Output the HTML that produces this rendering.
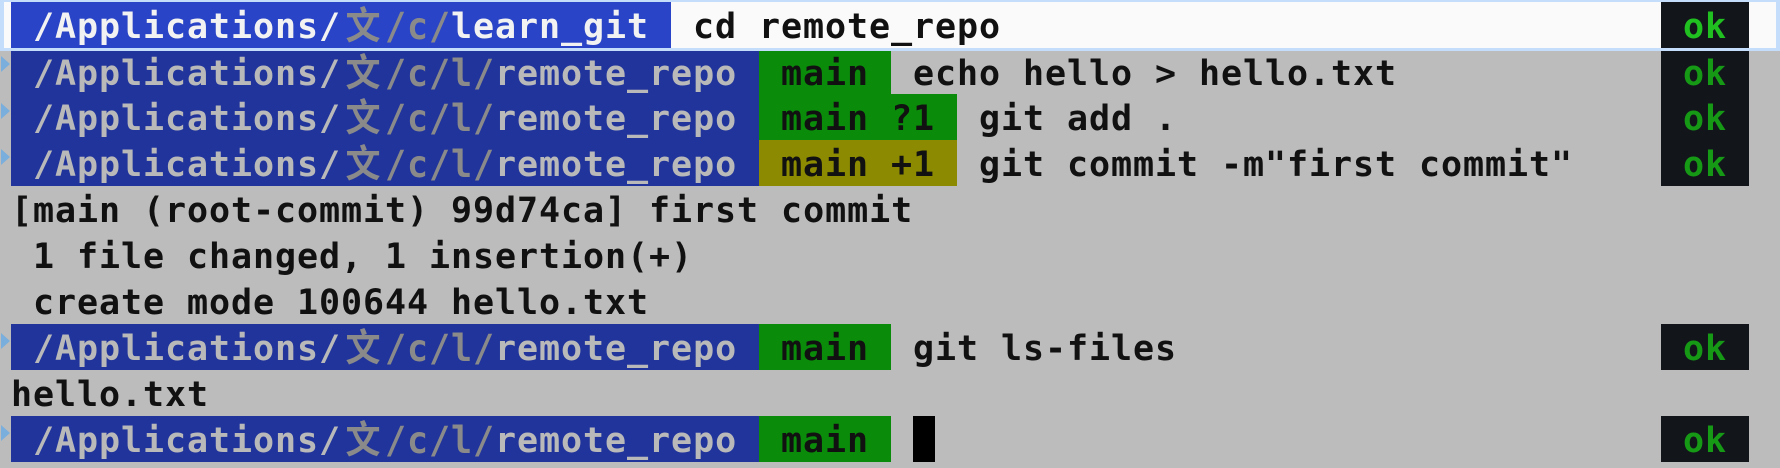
<!DOCTYPE html>
<html><head><meta charset="utf-8"><style>
html,body{margin:0;padding:0}
body{width:1780px;height:466px;background:#bcbcbc;position:relative;overflow:hidden;
font-family:"DejaVu Sans Mono","Liberation Mono","Noto Sans CJK SC",monospace;font-weight:bold;font-size:35px;}
.row{position:absolute;left:0;width:1780px;height:46px;}
.s{position:absolute;top:0;height:100%;line-height:50px;white-space:pre;letter-spacing:0.93px;}
.s span{display:inline-block;transform:scaleY(1.08)}
.b{background:#21349b;color:#b9b9b9}
.b1{background:#2944c6;color:#f2f2f2}
.dim{color:#8a8a8a}
.g{background:#0a8c0a;color:#111}
.o{background:#8c8a00;color:#111}
.t{color:#111}
.ok{background:#12161b;color:#169a16;text-align:center}
.cj{display:inline-block;width:44px;text-align:center;letter-spacing:0;font-weight:bold}
.tri{position:absolute;left:1px;width:0;height:0;border-top:8px solid transparent;border-bottom:8px solid transparent;border-left:9px solid #7aaedc;}
</style></head><body>
<div style="position:absolute;left:0;top:0;width:1780px;height:51px;background:#c4ddfa"></div>
<div style="position:absolute;left:4px;top:2px;width:1772px;height:46px;background:#fafafa"></div>
<div class="row" style="top:2px">
<div class="s b1" style="left:11px;width:660px"> /Applications/<span class="cj dim">文</span><span class="dim">/c/</span>learn_git</div>
<div class="s t" style="left:671px"> cd remote_repo</div>
<div class="s ok" style="left:1661px;width:88px;color:#20c020">ok</div>
</div>

<div class="row" style="top:51px;height:43px">
<div class="tri" style="top:5px"></div>
<div class="s b" style="left:11px;width:748px;line-height:46px"> /Applications/<span class="cj dim">文</span><span class="dim">/c/l/</span>remote_repo</div>
<div class="s g" style="left:759px;width:132px;line-height:46px"> main</div>
<div class="s t" style="left:891px;line-height:46px"> echo hello &gt; hello.txt</div>
</div>
<div class="row" style="top:94px">
<div class="tri" style="top:9px"></div>
<div class="s b" style="left:11px;width:748px"> /Applications/<span class="cj dim">文</span><span class="dim">/c/l/</span>remote_repo</div>
<div class="s g" style="left:759px;width:198px"> main ?1</div>
<div class="s t" style="left:957px"> git add .</div>
</div>
<div class="row" style="top:140px">
<div class="tri" style="top:9px"></div>
<div class="s b" style="left:11px;width:748px"> /Applications/<span class="cj dim">文</span><span class="dim">/c/l/</span>remote_repo</div>
<div class="s o" style="left:759px;width:198px"> main +1</div>
<div class="s t" style="left:957px"> git commit -m"first commit"</div>
</div>
<div style="position:absolute;left:1661px;top:51px;width:88px;height:135px;background:#12161b"></div>
<div class="s ok" style="left:1661px;top:51px;width:88px;height:43px;line-height:46px;background:none">ok</div>
<div class="s ok" style="left:1661px;top:94px;width:88px;height:46px;background:none">ok</div>
<div class="s ok" style="left:1661px;top:140px;width:88px;height:46px;background:none">ok</div>

<div class="row" style="top:186px"><div class="s t" style="left:11px">[main (root-commit) 99d74ca] first commit</div></div>
<div class="row" style="top:232px"><div class="s t" style="left:11px"> 1 file changed, 1 insertion(+)</div></div>
<div class="row" style="top:278px"><div class="s t" style="left:11px"> create mode 100644 hello.txt</div></div>

<div class="row" style="top:324px">
<div class="tri" style="top:9px"></div>
<div class="s b" style="left:11px;width:748px"> /Applications/<span class="cj dim">文</span><span class="dim">/c/l/</span>remote_repo</div>
<div class="s g" style="left:759px;width:132px"> main</div>
<div class="s t" style="left:891px"> git ls-files</div>
<div class="s ok" style="left:1661px;width:88px">ok</div>
</div>
<div class="row" style="top:370px"><div class="s t" style="left:11px">hello.txt</div></div>
<div class="row" style="top:416px">
<div class="tri" style="top:9px"></div>
<div class="s b" style="left:11px;width:748px"> /Applications/<span class="cj dim">文</span><span class="dim">/c/l/</span>remote_repo</div>
<div class="s g" style="left:759px;width:132px"> main</div>
<div style="position:absolute;left:913px;top:0;width:22px;height:46px;background:#000"></div>
<div class="s ok" style="left:1661px;width:88px">ok</div>
</div>
</body></html>
